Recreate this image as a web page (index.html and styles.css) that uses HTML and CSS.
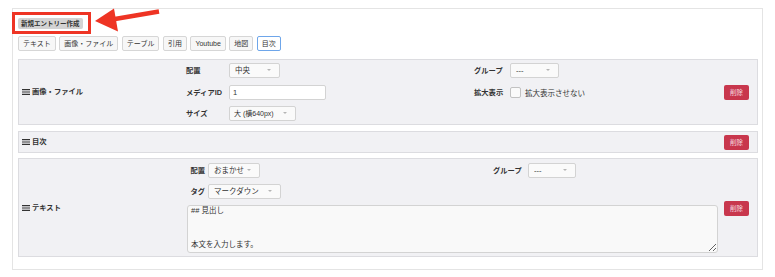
FILE: index.html
```html
<!DOCTYPE html>
<html lang="ja">
<head>
    <meta charset="UTF-8">
    <title>エントリー編集</title>
    <link rel="stylesheet" href="styles.css">
</head>
<body>
    <div class="editor">
        <button class="new-entry">新規エントリー作成</button>

        <div class="tabs">
            <button class="tab">テキスト</button>
            <button class="tab">画像・ファイル</button>
            <button class="tab">テーブル</button>
            <button class="tab">引用</button>
            <button class="tab">Youtube</button>
            <button class="tab">地図</button>
            <button class="tab active">目次</button>
        </div>

        <div class="unit unit-media">
            <div class="unit-title"><svg class="handle" width="8" height="6" viewBox="0 0 8 6"><path d="M0 0.6H8M0 3H8M0 5.4H8" stroke="#333" stroke-width="1.1"/></svg>画像・ファイル</div>
            <label class="field-label row1 col-l1">配置</label>
            <span class="select row1 col-i1"><select style="width:51px"><option>中央</option></select></span>
            <label class="field-label row1 col-l2">グループ</label>
            <span class="select row1 col-i2"><select style="width:49px"><option>---</option></select></span>

            <label class="field-label row2 col-l1">メディアID</label>
            <input class="text-input row2 col-i1" type="text" value="1">
            <label class="field-label row2 col-l2">拡大表示</label>
            <label class="check row2 col-i2"><input type="checkbox">拡大表示させない</label>

            <label class="field-label row3 col-l1">サイズ</label>
            <span class="select row3 col-i1"><select class="tight" style="width:67px"><option>大 (横640px)</option></select></span>

            <button class="btn-delete">削除</button>
        </div>

        <div class="unit unit-toc">
            <div class="unit-title"><svg class="handle" width="8" height="6" viewBox="0 0 8 6"><path d="M0 0.6H8M0 3H8M0 5.4H8" stroke="#333" stroke-width="1.1"/></svg>目次</div>
            <button class="btn-delete">削除</button>
        </div>

        <div class="unit unit-text">
            <div class="unit-title"><svg class="handle" width="8" height="6" viewBox="0 0 8 6"><path d="M0 0.6H8M0 3H8M0 5.4H8" stroke="#333" stroke-width="1.1"/></svg>テキスト</div>
            <div class="text-body">
                <div class="text-row">
                    <label class="field-label right">配置</label>
                    <span class="select"><select style="width:52px"><option>おまかせ</option></select></span>
                    <label class="field-label">グループ</label>
                    <span class="select"><select style="width:48px"><option>---</option></select></span>
                </div>
                <div class="text-row">
                    <label class="field-label right">タグ</label>
                    <span class="select"><select style="width:73px"><option>マークダウン</option></select></span>
                </div>
                <textarea class="text-area">## 見出し



本文を入力します。</textarea>
            </div>
            <button class="btn-delete">削除</button>
        </div>
    </div>

    <div class="annotation-box"></div>
    <svg class="annotation-arrow" width="70" height="30" viewBox="93 5 70 30">
        <polygon points="95,21 114,8.5 118,31.5" fill="#ee3424"/>
        <line x1="112" y1="19.5" x2="159" y2="11.5" stroke="#ee3424" stroke-width="4.5"/>
    </svg>
</body>
</html>
```

FILE: styles.css
```css
body {
    margin: 0;
    padding: 8px 12px 7px;
    font-family: "Liberation Sans", "Noto Sans CJK JP", sans-serif;
    font-size: 7.5px;
    color: #333;
    background: #fff;
}
button, input, select, textarea {
    font-family: inherit;
    color: #333;
}
.editor {
    border: 1px solid #e4e4e4;
    padding: 9px 4px 12px 5px;
}
.new-entry {
    display: block;
    height: 11px;
    padding: 0 3px;
    border: 0;
    border-radius: 2px;
    background: #d3d3d3;
    font-size: 6.5px;
    font-weight: bold;
    line-height: 11px;
}
.tabs {
    display: flex;
    gap: 3.5px;
    margin: 7px 0 8px;
}
.tab {
    height: 15px;
    padding: 0 4px;
    border: 1px solid #d6d6d6;
    border-radius: 2px;
    background: #f7f7f7;
    font-size: 7px;
    line-height: 13px;
}
.tab.active {
    border-color: #6ea6ea;
    background: #fff;
}
.unit {
    border: 1px solid #dcdce0;
    background: #f1f1f4;
}
.unit-toc {
    margin-top: 6px;
}
.unit-text {
    margin-top: 5px;
}
.unit-title {
    display: flex;
    align-items: center;
    gap: 2px;
    padding-left: 3px;
    font-size: 7.3px;
    font-weight: bold;
    line-height: 10px;
}
.handle {
    display: block;
}
.field-label {
    font-size: 7.3px;
    font-weight: bold;
    line-height: 15px;
    white-space: nowrap;
}
.field-label.right {
    text-align: right;
}
.select {
    position: relative;
    display: inline-block;
    height: 15px;
}
.select select {
    appearance: none;
    -webkit-appearance: none;
    display: block;
    height: 15px;
    margin: 0;
    padding: 0 0 0 5px;
    border: 1px solid #d3d3d3;
    border-radius: 2px;
    background: #fafafa;
    font-size: 7.5px;
    line-height: 13px;
}
.select select.tight {
    padding-left: 4px;
    font-size: 7px;
}
.select::after {
    content: "";
    position: absolute;
    right: 9px;
    top: 6px;
    border-left: 2px solid transparent;
    border-right: 2px solid transparent;
    border-top: 2.5px solid #b5b5b5;
}
.text-input {
    box-sizing: border-box;
    width: 97px;
    height: 15px;
    margin: 0;
    padding: 0 3px;
    border: 1px solid #d3d3d3;
    border-radius: 2px;
    background: #fff;
    font-size: 7.5px;
}
.check {
    display: flex;
    align-items: center;
    gap: 4px;
    font-size: 7.5px;
}
.check input {
    appearance: none;
    -webkit-appearance: none;
    width: 11px;
    height: 11px;
    margin: 0;
    border: 1px solid #c2c2c2;
    border-radius: 2px;
    background: #fafafa;
}
.btn-delete {
    width: 25px;
    height: 15px;
    padding: 0;
    border: 0;
    border-radius: 2px;
    background: #c8374d;
    color: #f6dde0;
    font-size: 6.5px;
    line-height: 15px;
}

/* 画像・ファイル */
.unit-media {
    display: grid;
    grid-template-columns: 167px 43px 245px 36px 1fr auto;
    grid-template-rows: repeat(3, 15px);
    row-gap: 6.5px;
    padding: 3px 8px 3px 0;
    align-items: center;
}
.unit-media .unit-title {
    grid-column: 1;
    grid-row: 1 / 4;
}
.unit-media .btn-delete {
    grid-column: 6;
    grid-row: 1 / 4;
}
.row1 { grid-row: 1; }
.row2 { grid-row: 2; }
.row3 { grid-row: 3; }
.col-l1 { grid-column: 2; }
.col-i1 { grid-column: 3; justify-self: start; }
.col-l2 { grid-column: 4; }
.col-i2 { grid-column: 5; justify-self: start; }

/* 目次 */
.unit-toc {
    display: flex;
    align-items: center;
    justify-content: space-between;
    height: 20px;
    padding-right: 8px;
}

/* テキスト */
.unit-text {
    display: grid;
    grid-template-columns: 162px 1fr auto;
    column-gap: 6px;
    align-items: center;
    padding: 4px 8px 3px 0;
}
.text-body {
    display: flex;
    flex-direction: column;
    gap: 6px;
}
.text-row {
    display: grid;
    grid-template-columns: 18px 282px 32px auto;
    column-gap: 3px;
    align-items: center;
}
.text-row .select {
    justify-self: start;
}
.text-area {
    box-sizing: border-box;
    display: block;
    width: 100%;
    height: 48px;
    margin: 0;
    padding: 1px 3px;
    border: 1px solid #d3d3d3;
    border-radius: 3px;
    background: #f9f9f9;
    font-size: 7.5px;
    line-height: 8.5px;
    resize: vertical;
}

/* 注釈 */
.annotation-box {
    position: absolute;
    left: 12px;
    top: 12px;
    width: 79px;
    height: 22px;
    box-sizing: border-box;
    border: 3px solid #ee3424;
}
.annotation-arrow {
    position: absolute;
    left: 93px;
    top: 5px;
}
```
